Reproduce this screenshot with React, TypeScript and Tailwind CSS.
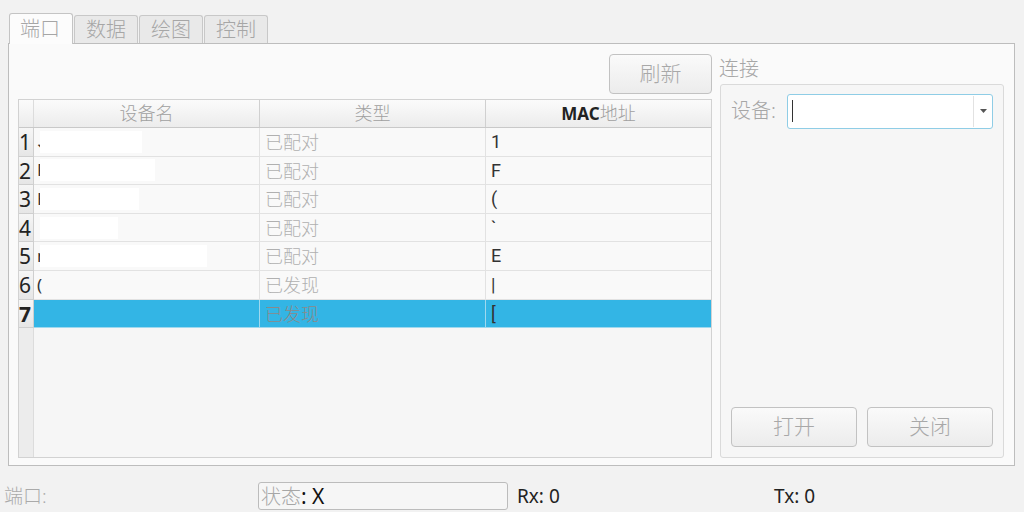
import React from 'react';

const font = { fontFamily: '"Noto Sans", "Noto Sans CJK SC", sans-serif' };

// rows of the device table
const rows = [
  { first: '、', mask: 'w-[102px]', type: '已配对', mac: '1' },
  { first: 'F', mask: 'w-[115px]', type: '已配对', mac: 'F' },
  { first: 'H', mask: 'w-[99px]', type: '已配对', mac: '(' },
  { first: '', mask: 'w-[78px]', type: '已配对', mac: '`' },
  { first: 'n', mask: 'w-[167px]', type: '已配对', mac: 'E' },
  { first: '(', mask: 'w-0', type: '已发现', mac: '|' },
  { first: '', mask: 'w-0', type: '已发现', mac: '[' },
];

const tabs = ['端口', '数据', '绘图', '控制'];

const App: React.FC = () => {
  return (
    <div className="w-[1024px] h-[512px] bg-[#f2f2f2] flex flex-col overflow-hidden" style={font}>
      {/* Tabs */}
      <div className="flex items-end pl-[9px] pt-[12px] h-[43px] gap-[1px]">
        {tabs.map((t, i) =>
          i === 0 ? (
            <div
              key={t}
              className="w-[64px] h-[31px] bg-[#fcfcfc] border border-b-0 border-[#c4c4c4] rounded-t-[3px] text-[20px] leading-[30px] pl-[10px] text-[#a6a6a6] font-light relative z-10 -mb-px"
            >
              {t}
            </div>
          ) : (
            <div
              key={t}
              className="w-[64px] h-[28px] bg-[#e9e9e9] border border-b-0 border-[#c8c8c8] rounded-t-[3px] text-[20px] leading-[27px] text-center text-[#a6a6a6] font-light"
            >
              {t}
            </div>
          )
        )}
      </div>

      {/* Main panel */}
      <div className="ml-[8px] w-[1007px] h-[424px] bg-[#fafafa] border border-[#bdbdbd] flex pl-[9px] pt-[10px] pb-[7px] gap-[7px]">
        {/* Left: refresh + table */}
        <div className="w-[694px] flex flex-col gap-[5px]">
          <div className="flex justify-end">
            <button className="w-[103px] h-[40px] border border-[#c2c2c2] rounded-[4px] bg-gradient-to-b from-[#fafafa] to-[#ececec] text-[21px] text-[#a8a8a8] font-light">
              刷新
            </button>
          </div>
          <div className="flex-1 border border-[#d2d2d2] bg-[#f6f6f6] flex flex-col">
            {/* Header */}
            <div className="flex h-[28px] bg-gradient-to-b from-[#fbfbfb] to-[#ececec] border-b border-[#c9c9c9] text-[18px] text-[#a0a0a0] font-light leading-[27px]">
              <div className="w-[15px] border-r border-[#dcdcdc]" />
              <div className="w-[226px] border-r border-[#d0d0d0] text-center">设备名</div>
              <div className="w-[226px] border-r border-[#d0d0d0] text-center">类型</div>
              <div className="flex-1 text-center">
                <span className="font-bold text-[#222] text-[17px]">MAC</span>地址
              </div>
            </div>
            {/* Rows */}
            {rows.map((r, i) => {
              const sel = i === rows.length - 1;
              return (
                <div key={i} className="flex h-[28.6px] leading-[28px]">
                  <div
                    className={`w-[15px] bg-gradient-to-b from-[#f6f6f6] to-[#e6e6e6] border-b border-r border-[#cfcfcf] text-[21px] text-[#222] overflow-hidden ${sel ? 'font-bold' : ''}`}
                  >
                    {i + 1}
                  </div>
                  <div
                    className={`w-[226px] flex items-center border-b border-r ${sel ? 'bg-[#33b5e5] border-[#9fd8ee]' : 'bg-[#f9f9f9] border-[#e2e2e2]'} text-[17px] text-[#333] pl-[3px]`}
                  >
                    <span className="w-[3px]">{r.first}</span>
                    <div className={`${r.mask} h-[22px] bg-white`} />
                  </div>
                  <div
                    className={`w-[226px] border-b border-r ${sel ? 'bg-[#33b5e5] border-[#9fd8ee] text-[#8a8a8a]' : 'bg-[#f9f9f9] border-[#e2e2e2] text-[#b0b0b0]'} text-[18px] font-light pl-[5px]`}
                  >
                    {r.type}
                  </div>
                  <div
                    className={`flex-1 border-b ${sel ? 'bg-[#33b5e5] border-[#9fd8ee]' : 'bg-[#f9f9f9] border-[#e2e2e2]'} text-[18px] text-[#333] pl-[5px]`}
                    style={{ fontFamily: '"Roboto", sans-serif' }}
                  >
                    {r.mac}
                  </div>
                </div>
              );
            })}
            <div className="flex-1 flex">
              <div className="w-[15px] bg-[#ececec] border-r border-[#dcdcdc]" />
            </div>
          </div>
        </div>

        {/* Right: connection group */}
        <div className="w-[285px] flex flex-col">
          <div className="h-[30px] text-[20px] text-[#a6a6a6] font-light leading-[30px]">连接</div>
          <div className="flex-1 ml-[1px] border border-[#dadada] rounded-[3px] bg-[#f6f6f6] flex flex-col px-[10px] pt-[9px] pb-[10px]">
            <div className="flex items-center">
              <div className="w-[56px] text-[20px] text-[#a6a6a6] font-light">设备:</div>
              <div className="w-[207px] h-[35px] border border-[#8fcde6] rounded-[3px] bg-white flex items-center">
                <div className="flex-1 h-full flex items-center pl-[4px]">
                  <div className="w-px h-[22px] bg-[#333]" />
                </div>
                <div className="w-[19px] h-[31px] border-l border-[#e2e2e2] flex items-center justify-center">
                  <svg width="7" height="4" viewBox="0 0 7 4">
                    <path d="M0 0h7L3.5 4z" fill="#555" />
                  </svg>
                </div>
              </div>
            </div>
            <div className="flex-1" />
            <div className="flex gap-[10px]">
              <button className="w-[127px] h-[40px] border border-[#c2c2c2] rounded-[4px] bg-gradient-to-b from-[#fafafa] to-[#ececec] text-[21px] text-[#a8a8a8] font-light">
                打开
              </button>
              <button className="w-[127px] h-[40px] border border-[#c2c2c2] rounded-[4px] bg-gradient-to-b from-[#fafafa] to-[#ececec] text-[21px] text-[#a8a8a8] font-light">
                关闭
              </button>
            </div>
          </div>
        </div>
      </div>

      {/* Status bar */}
      <div className="flex items-center h-[46px] pt-[14px] text-[19px]">
        <div className="w-[258px] pl-[4px] text-[#aaaaaa] font-light">端口:</div>
        <div className="w-[250px] h-[28px] border border-[#bcbcbc] rounded-[3px] bg-[#f6f6f6] leading-[26px] pl-[2px]">
          <span className="text-[#a6a6a6] font-light text-[20px]">状态</span>
          <span className="text-[#111] text-[21px]">: X</span>
        </div>
        <div className="w-[266px] pl-[9px] text-[#222]">Rx: 0</div>
        <div className="text-[#222]">Tx: 0</div>
      </div>
    </div>
  );
};

export default App;
